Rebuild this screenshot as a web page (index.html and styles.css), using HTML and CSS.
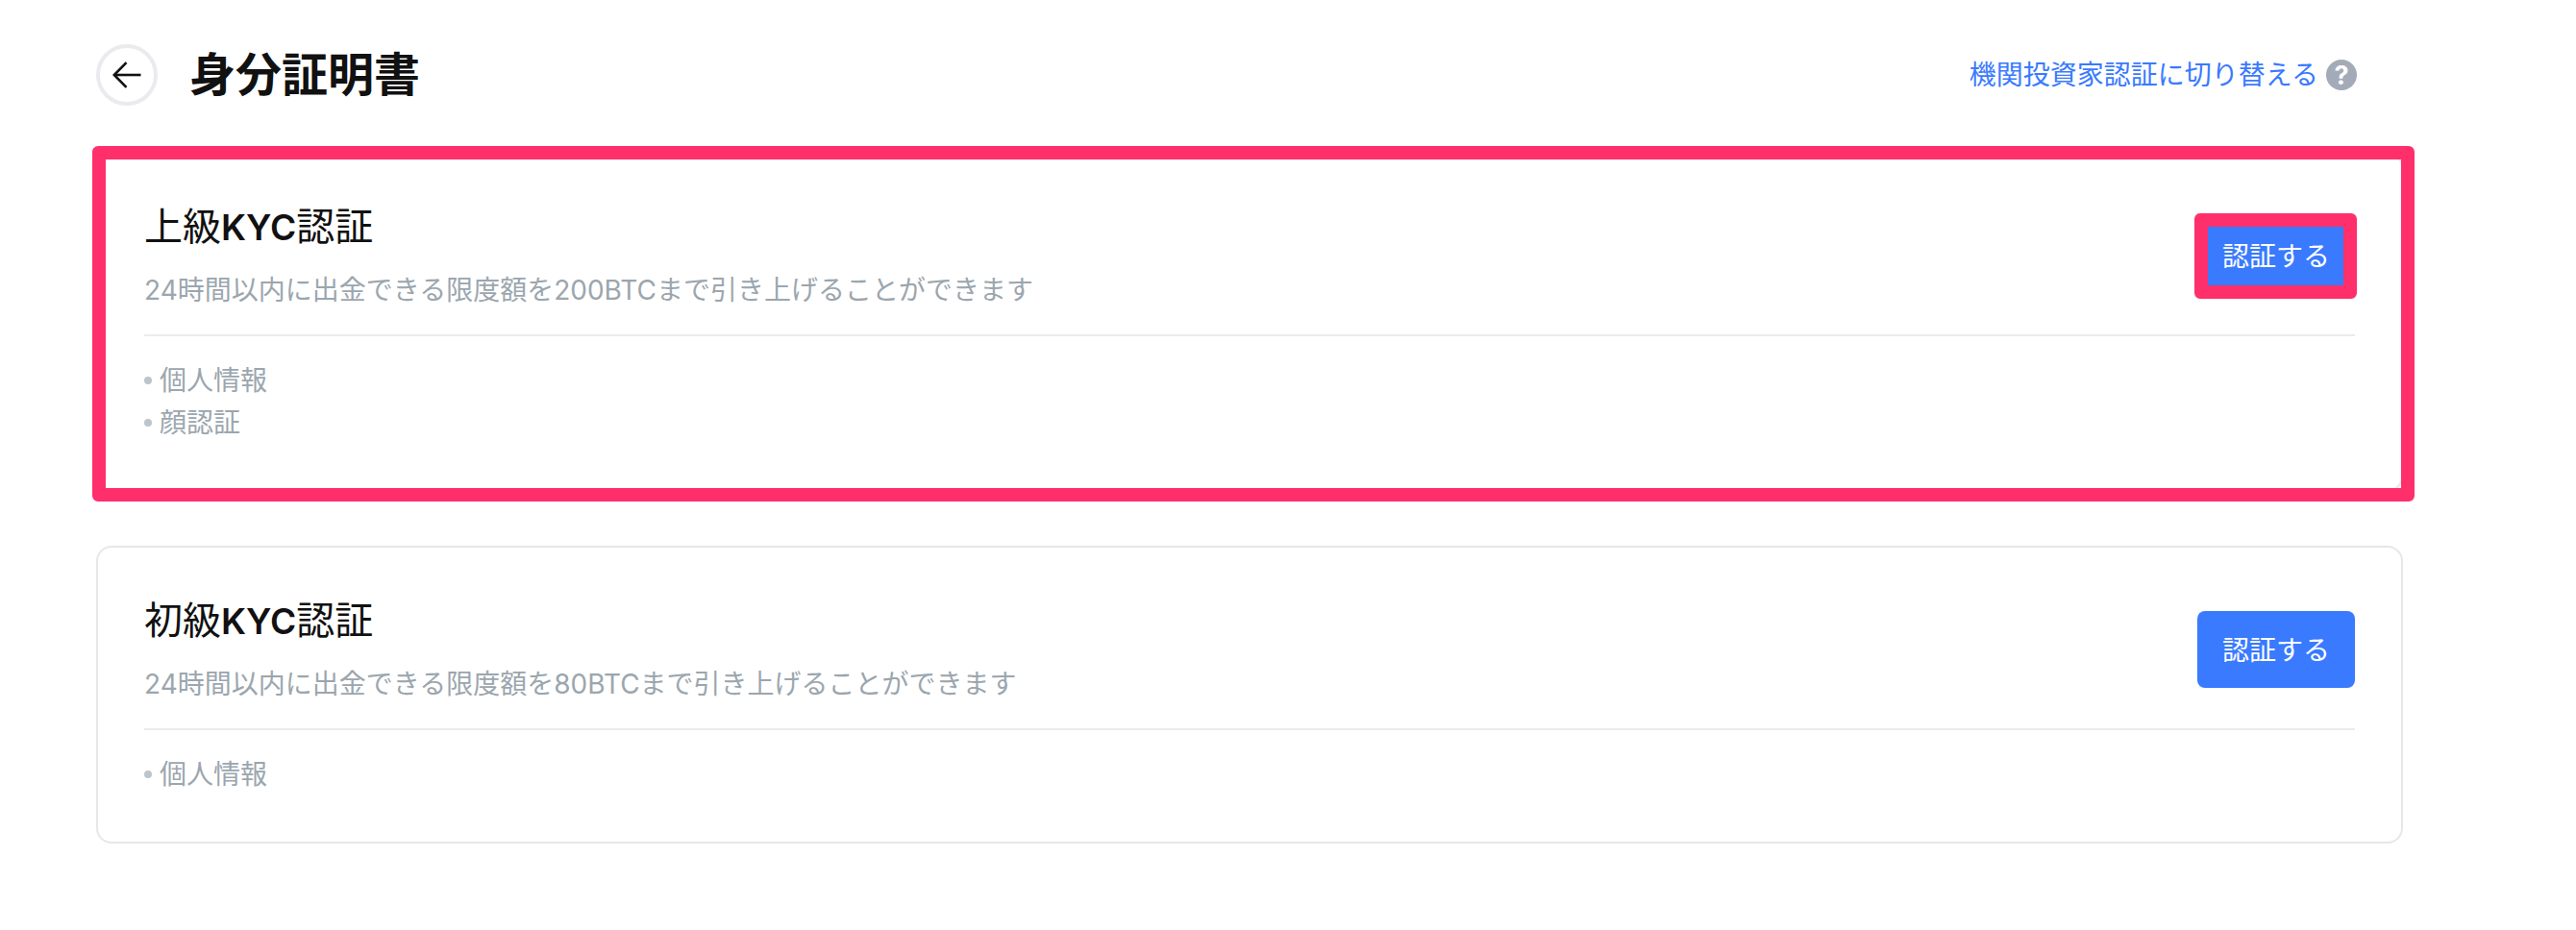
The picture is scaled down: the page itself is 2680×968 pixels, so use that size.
FILE: index.html
```html
<!DOCTYPE html>
<html lang="ja">
<head>
<meta charset="utf-8">
<title>身分証明書</title>
<link rel="stylesheet" href="styles.css">
</head>
<body>
<main class="page">
  <header class="top">
    <div class="top-left">
      <a class="back" href="#" aria-label="戻る">
        <svg width="30" height="30" viewBox="0 0 30 30" fill="none" stroke="#111" stroke-width="2.6">
          <path d="M29.5 15H1.8"/>
          <path d="M14.5 2.2 1.8 15l12.7 12.8"/>
        </svg>
      </a>
      <h1 class="heading">身分証明書</h1>
    </div>
    <a class="switch" href="#">機関投資家認証に切り替える<span class="help">?</span></a>
  </header>

  <section class="card card-first">
    <div class="card-head">
      <div>
        <h2 class="card-title">上級<span class="latin">KYC</span>認証</h2>
        <p class="card-desc">24時間以内に出金できる限度額を200BTCまで引き上げることができます</p>
      </div>
      <div class="btn-wrap">
        <button class="btn">認証する</button>
        <span class="mark mark-btn"></span>
      </div>
    </div>
    <ul class="req">
      <li>個人情報</li>
      <li>顔認証</li>
    </ul>
    <span class="mark mark-card"></span>
  </section>

  <section class="card">
    <div class="card-head">
      <div>
        <h2 class="card-title">初級<span class="latin">KYC</span>認証</h2>
        <p class="card-desc">24時間以内に出金できる限度額を80BTCまで引き上げることができます</p>
      </div>
      <div class="btn-wrap">
        <button class="btn">認証する</button>
      </div>
    </div>
    <ul class="req">
      <li>個人情報</li>
    </ul>
  </section>
</main>
</body>
</html>
```
FILE: styles.css
```css
* { box-sizing: border-box; }
html, body { margin: 0; padding: 0; background: #fff; }
body {
  font-family: Inter, "Noto Sans CJK JP", sans-serif;
  color: #111;
}
.page { width: 2400px; margin-left: 100px; padding-top: 46px; }
.top { display: flex; align-items: center; justify-content: space-between; height: 64px; padding-right: 48px; }
.top-left { display: flex; align-items: center; gap: 33px; }
.back {
  width: 64px; height: 64px; border: 4px solid #e9ebee; border-radius: 50%;
  display: flex; align-items: center; justify-content: center;
}
.heading { margin: 0; font-size: 48px; line-height: 64px; font-weight: 700; color: #111; }
.switch { display: flex; align-items: center; gap: 8px; font-size: 28px; line-height: 40px; color: #397aff; text-decoration: none; }
.help {
  width: 32px; height: 32px; border-radius: 50%; background: #a4abb8; color: #fff;
  display: flex; align-items: center; justify-content: center;
  font-size: 27px; font-weight: 700; line-height: 1;
}
.card { position: relative; border: 2px solid #e6e7e9; border-radius: 16px; padding: 48px; margin-bottom: 56px; }
.card-first { margin-top: 48px; }
.card-head { display: flex; align-items: center; justify-content: space-between; padding-bottom: 26px; border-bottom: 2px solid #eaebef; }
.card-title { margin: 0; font-size: 40px; line-height: 56px; font-weight: 400; color: #111; }
.latin { font-size: 37px; font-weight: 600; line-height: 1; }
.card-desc { margin: 18px 0 0; font-size: 28px; line-height: 40px; color: #9ba6ae; }
.btn-wrap { position: relative; flex: none; margin-top: 2px; }
.btn {
  display: block; width: 164px; height: 80px; border: 0; border-radius: 8px; background: #397aff; color: #fff;
  font-family: inherit; font-size: 28px; padding: 0 0 2px;
}
.req { list-style: none; margin: 0; padding: 24px 0 0; }
.req li { position: relative; padding-left: 16px; font-size: 28px; line-height: 44px; color: #9ba6ae; }
.req li::before {
  content: ""; position: absolute; left: 0; top: 18px; width: 8px; height: 8px; border-radius: 50%; background: #bcc5cc;
}
.mark { position: absolute; border: 14px solid #ff2f6c; border-radius: 6px; pointer-events: none; }
.mark-card { left: -6px; right: -14px; top: -8px; bottom: -12px; }
.mark-btn { left: -3px; right: -2px; top: -4px; bottom: -5px; }
```
